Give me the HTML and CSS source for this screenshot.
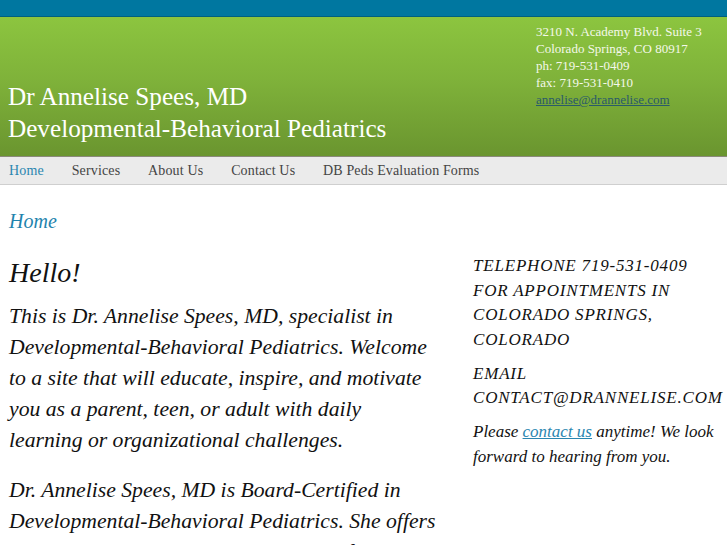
FILE: index.html
```html
<!DOCTYPE html>
<html>
<head>
<meta charset="utf-8">
<link rel="stylesheet" href="styles.css">
</head>
<body>
<div class="topbar"></div>
<header class="header">
  <div class="title">
    <div>Dr Annelise Spees, MD</div>
    <div>Developmental-Behavioral Pediatrics</div>
  </div>
  <div class="address">
    <div>3210 N. Academy Blvd. Suite 3</div>
    <div>Colorado Springs, CO 80917</div>
    <div>ph: 719-531-0409</div>
    <div>fax: 719-531-0410</div>
    <div><a href="#">annelise@drannelise.com</a></div>
  </div>
</header>
<nav class="nav">
  <a class="active" href="#">Home</a>
  <a href="#">Services</a>
  <a href="#">About Us</a>
  <a href="#">Contact Us</a>
  <a href="#">DB Peds Evaluation Forms</a>
</nav>
<div class="page">
  <h2 class="pagetitle">Home</h2>
  <div class="cols">
    <div class="main">
      <h1 class="hello">Hello!</h1>
      <p>This is Dr. Annelise Spees, MD, specialist in Developmental-Behavioral Pediatrics. Welcome to a site that will educate, inspire, and motivate you as a parent, teen, or adult with daily learning or organizational challenges.</p>
      <p>Dr. Annelise Spees, MD is Board-Certified in Developmental-Behavioral Pediatrics. She offers medical consultation and assessment of a wide range of concerns.</p>
    </div>
    <aside class="side">
      <p class="caps">Telephone 719-531-0409 for appointments in Colorado Springs, Colorado</p>
      <p class="caps">Email contact@drannelise.com</p>
      <p>Please <a href="#">contact us</a> anytime! We look forward to hearing from you.</p>
    </aside>
  </div>
</div>
</body>
</html>
```
FILE: styles.css
```css
html, body { margin: 0; padding: 0; }
body { background: #fff; font-family: "Liberation Serif", "Times New Roman", serif; overflow: hidden; width: 727px; height: 545px; }
.topbar { height: 16px; background: #0077a0; border-bottom: 1px solid #00607f; }
.header {
  height: 139px;
  background: linear-gradient(to bottom, #8cc53f 0%, #7fb23a 45%, #6a952f 100%);
  border-bottom: 1px solid #8a8a7a;
  display: flex;
  justify-content: space-between;
  color: #fff;
}
.title { align-self: flex-end; padding: 0 0 11px 8px; font-size: 25.2px; line-height: 32px; }
.address { padding: 6px 0 0 0; width: 191px; font-size: 13px; line-height: 17px; color: #f4f8ea; }
.address a { color: #2a5a6a; }
.nav { height: 27px; background: #ebebeb; border-bottom: 1px solid #cfcfcf; display: flex; align-items: center; padding-left: 9px; gap: 27.8px; }
.nav a { color: #444; text-decoration: none; font-size: 14px; letter-spacing: 0.15px; }
.nav a.active { color: #2a86b0; }
.page { padding: 0 0 0 9px; }
.pagetitle { margin: 24px 0 0 0; font-style: italic; font-weight: normal; font-size: 20px; line-height: 24px; color: #1f83ad; }
.cols { display: flex; }
.main { width: 428px; flex: none; font-style: italic; color: #111; }
.hello { margin: 20px 0 8px 0; font-weight: normal; font-size: 28px; line-height: 40px; }
.main p { margin: 0 0 19px 0; font-size: 21.7px; line-height: 31px; }
.side { margin-left: 36px; width: 248px; flex: none; font-style: italic; color: #111; font-size: 17px; line-height: 24.5px; padding-top: 21px; }
.side p { margin: 0 0 9.5px 0; }
.side .caps { text-transform: uppercase; font-size: 17px; letter-spacing: 0.8px; }
.side a { color: #2a86b0; }
```
